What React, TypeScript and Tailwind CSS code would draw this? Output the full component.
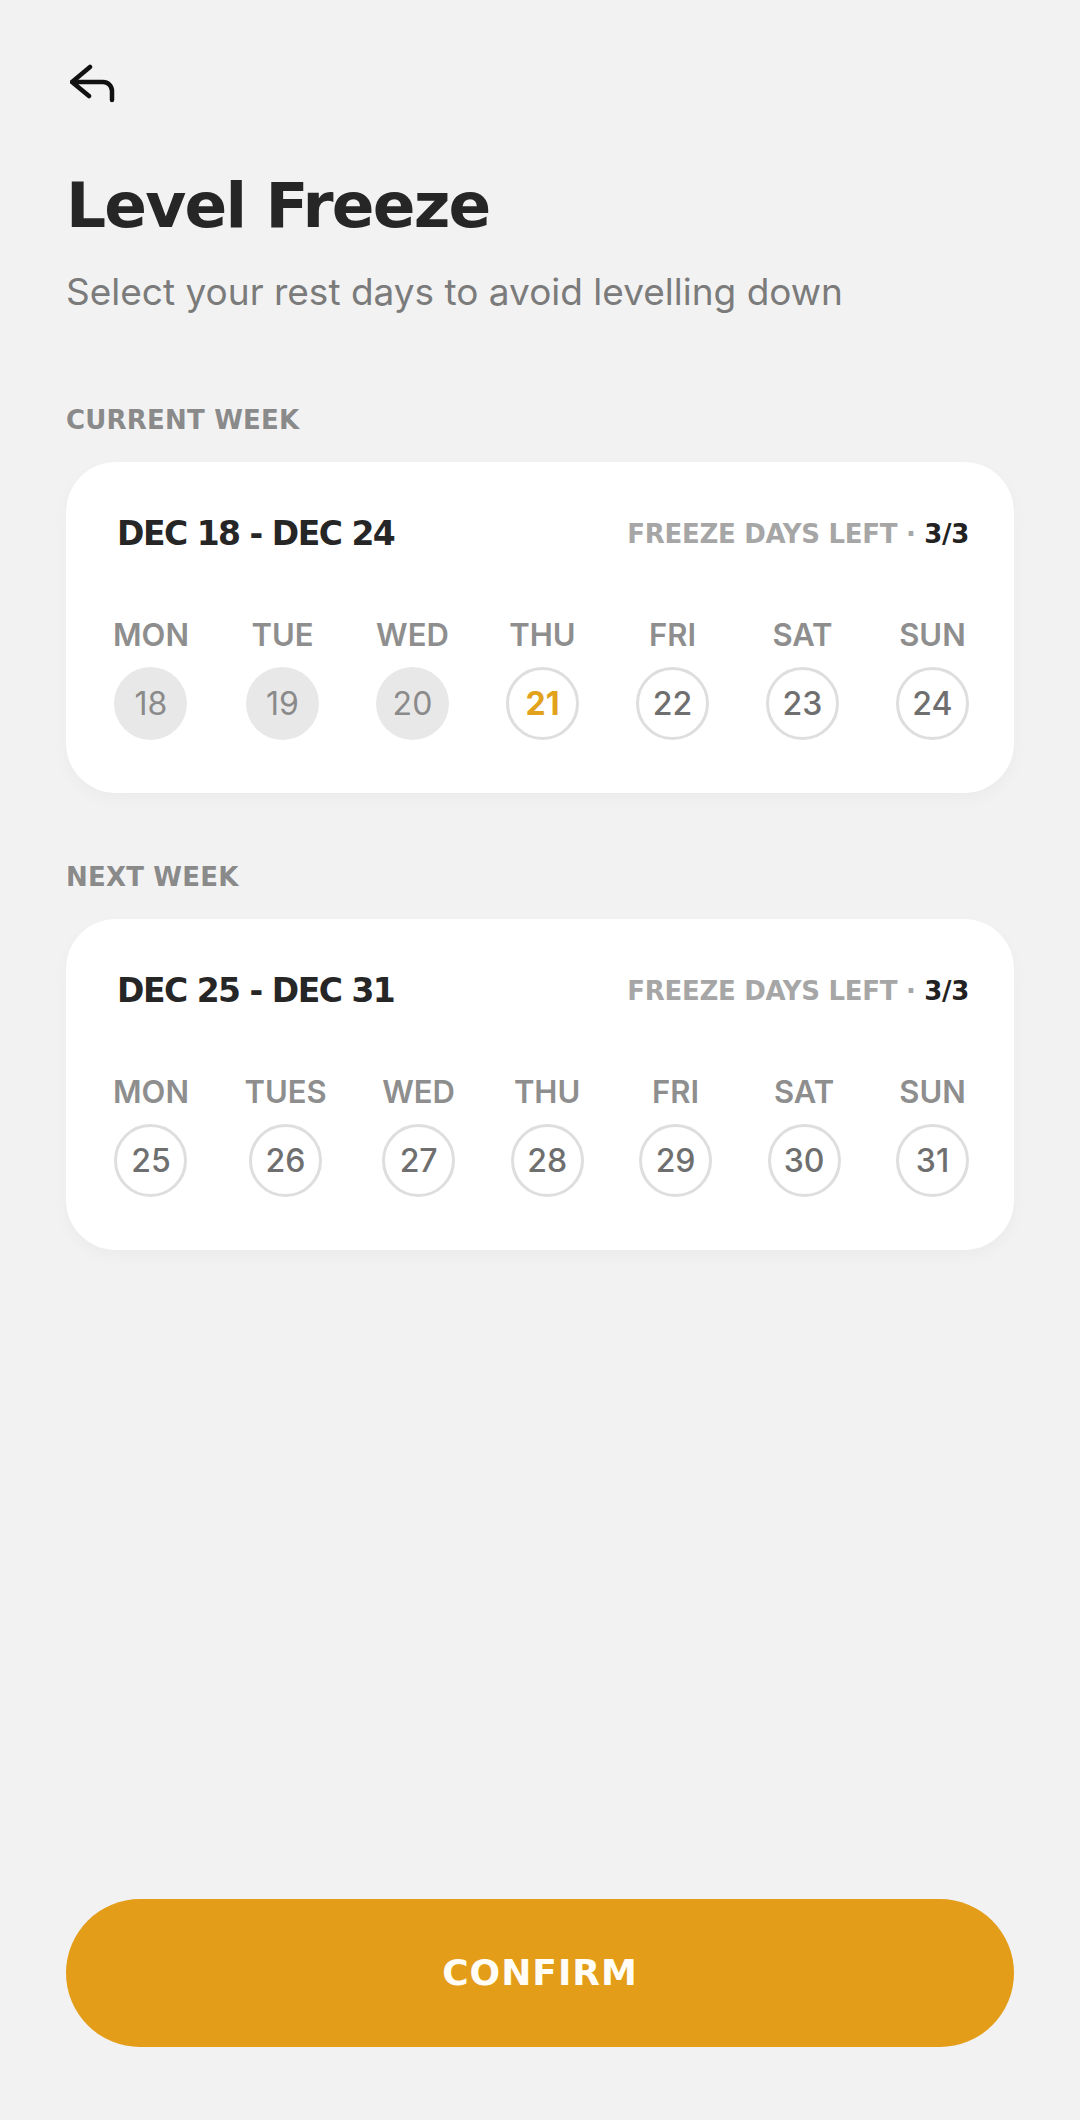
type DayState = 'past' | 'today' | 'open';

type Day = {
  label: string;
  date: number;
  state: DayState;
};

type Week = {
  title: string;
  range: string;
  left: string;
  days: Day[];
};

const weeks: Week[] = [
  {
    title: 'CURRENT WEEK',
    range: 'DEC 18 - DEC 24',
    left: '3/3',
    days: [
      { label: 'MON', date: 18, state: 'past' },
      { label: 'TUE', date: 19, state: 'past' },
      { label: 'WED', date: 20, state: 'past' },
      { label: 'THU', date: 21, state: 'today' },
      { label: 'FRI', date: 22, state: 'open' },
      { label: 'SAT', date: 23, state: 'open' },
      { label: 'SUN', date: 24, state: 'open' },
    ],
  },
  {
    title: 'NEXT WEEK',
    range: 'DEC 25 - DEC 31',
    left: '3/3',
    days: [
      { label: 'MON', date: 25, state: 'open' },
      { label: 'TUES', date: 26, state: 'open' },
      { label: 'WED', date: 27, state: 'open' },
      { label: 'THU', date: 28, state: 'open' },
      { label: 'FRI', date: 29, state: 'open' },
      { label: 'SAT', date: 30, state: 'open' },
      { label: 'SUN', date: 31, state: 'open' },
    ],
  },
];

const circleStyles: Record<DayState, string> = {
  past: 'bg-[#e8e8e8] text-[#8a8a8a] font-normal',
  today: 'bg-white border-[3px] border-[#dedede] text-[#e2a21b] font-bold',
  open: 'bg-white border-[3px] border-[#dedede] text-[#6f6f6f] font-medium',
};

const BackIcon = () => (
  <svg width="48" height="40" viewBox="0 0 48 40" fill="none">
    <path
      d="M20 3 L2 18 L19 32 M2 18 H33 A9 9 0 0 1 42 27 V36"
      stroke="#111111"
      strokeWidth="4.5"
      strokeLinecap="round"
      strokeLinejoin="round"
    />
  </svg>
);

const WeekCard = ({ week }: { week: Week }) => {
  return (
    <div className="rounded-[50px] bg-white pl-[47px] pr-[45px] pt-[55px] pb-[53px] shadow-[0_6px_16px_rgba(0,0,0,0.03)]">
      {/* Header */}
      <div className="flex items-center justify-between pl-[4px]">
        <span className="font-['DejaVu_Sans',sans-serif] text-[33px] leading-[33px] font-bold tracking-[-1.5px] text-[#262626]">
          {week.range}
        </span>
        <span className="font-['DejaVu_Sans',sans-serif] text-[26px] leading-[26px] font-bold tracking-[-0.3px] text-[#a6a6a6]">
          FREEZE DAYS LEFT · <span className="text-[#222222]">{week.left}</span>
        </span>
      </div>

      {/* Days */}
      <div className="mt-[69px] flex justify-between font-['Inter',sans-serif]">
        {week.days.map((day) => (
          <div key={day.date} className="flex flex-col items-center">
            <span className="text-[31px] leading-[31px] font-semibold text-[#8e8e8e]">
              {day.label}
            </span>
            <div
              className={`mt-[17px] flex h-[73px] w-[73px] items-center justify-center rounded-full text-[32px] leading-none ${circleStyles[day.state]}`}
            >
              {day.date}
            </div>
          </div>
        ))}
      </div>
    </div>
  );
};

const App = () => {
  return (
    <div className="flex min-h-[2120px] flex-col bg-[#f2f2f2] px-[66px] pt-[64px] pb-[73px]">
      <button className="ml-[4px] h-[40px] w-[48px]">
        <BackIcon />
      </button>

      <h1 className="mt-[70px] font-['DejaVu_Sans',sans-serif] text-[63px] leading-[63px] font-bold tracking-[-1.8px] text-[#262626]">
        Level Freeze
      </h1>
      <p className="mt-[36px] font-['Inter',sans-serif] text-[37px] leading-[37px] text-[#7b7b7b]">
        Select your rest days to avoid levelling down
      </p>

      {weeks.map((week, i) => (
        <div key={week.title} className={i === 0 ? 'mt-[97px]' : 'mt-[71px]'}>
          <h2 className="font-['DejaVu_Sans',sans-serif] text-[26px] leading-[26px] font-bold tracking-[0.2px] text-[#8a8a8a]">
            {week.title}
          </h2>
          <div className="mt-[29px]">
            <WeekCard week={week} />
          </div>
        </div>
      ))}

      <button className="mt-auto flex h-[148px] w-full items-center justify-center rounded-full bg-[#e49d18] font-['DejaVu_Sans',sans-serif] text-[36px] font-bold tracking-[1px] text-[#fffdf5]">
        CONFIRM
      </button>
    </div>
  );
};

export default App;
